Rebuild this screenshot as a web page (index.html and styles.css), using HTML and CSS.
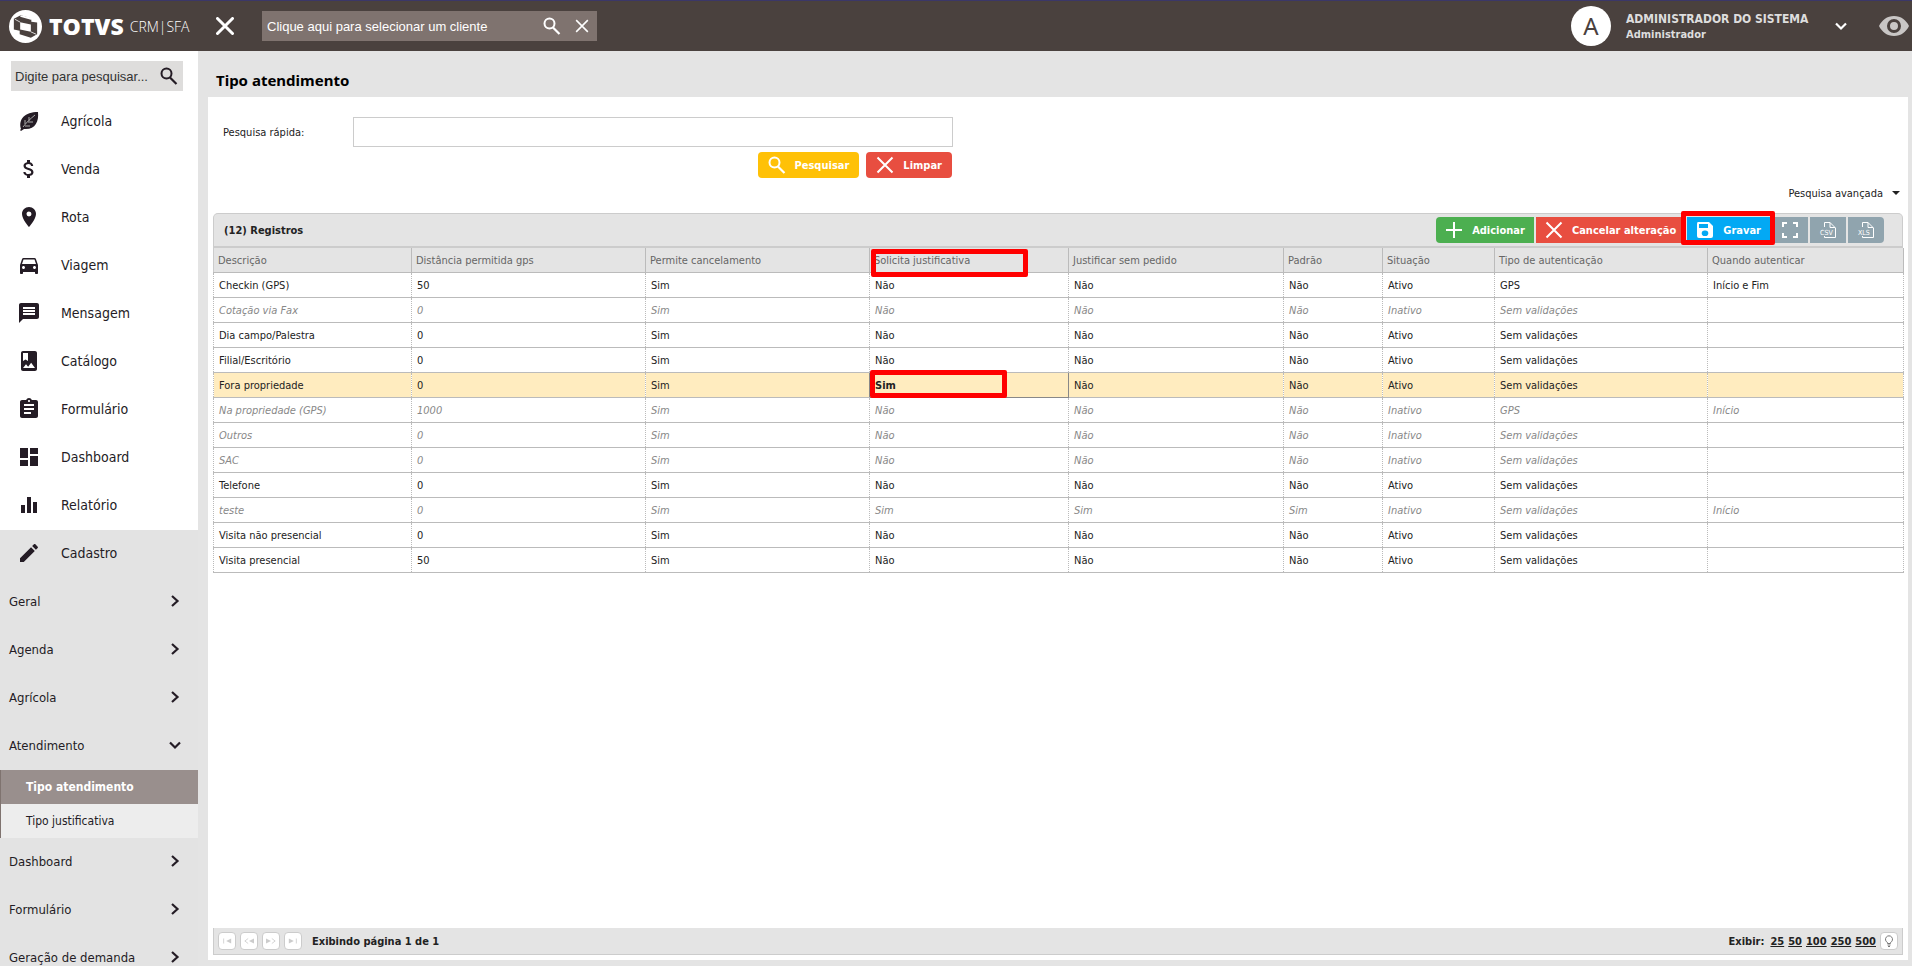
FILE: index.html
```
<!DOCTYPE html>
<html lang="pt-BR">
<head>
    <meta charset="utf-8">
    <title>TOTVS CRM | SFA - Tipo atendimento</title>
    <link rel="stylesheet" href="styles.css">
</head>
<body>
    <svg class="sprite" aria-hidden="true">
        <symbol id="search" viewBox="0 0 18 18"><circle cx="6.500" cy="6.500" r="5" fill="none" stroke="currentColor" stroke-width="2"/><path d="M10 10.500 L16.500 17" stroke="currentColor" stroke-width="2.200"/></symbol>
        <symbol id="close" viewBox="0 0 18 18"><path d="M1.500 1.500 L16.500 16.500 M16.500 1.500 L1.500 16.500" stroke="currentColor" stroke-width="2"/></symbol>
        <symbol id="close-bold" viewBox="0 0 18 18"><path d="M1.500 1.500 L16.500 16.500 M16.500 1.500 L1.500 16.500" stroke="currentColor" stroke-width="3" stroke-linecap="round"/></symbol>
        <symbol id="right" viewBox="0 0 12 12"><path d="M3 1 L8.500 6 L3 11" fill="none" stroke="currentColor" stroke-width="2.200"/></symbol>
        <symbol id="down" viewBox="0 0 12 12"><path d="M1 3.500 L6 8.500 L11 3.500" fill="none" stroke="currentColor" stroke-width="2.200"/></symbol>
    </svg>

    <header class="topbar">
        <a class="brand" href="#">
            <svg class="brand-mark" viewBox="0 0 34 34"><circle cx="17" cy="17" r="17" fill="#fff"/><path d="M12 5.500 L23 8.500 V12 L29 13 V25 L22.500 28.500 L11 25 V21.500 L5 20 V9 Z" fill="#4a413e"/><path d="M11.500 12.500 L22.500 15 V22.500 L11.500 20 Z M12 5.500 L11.500 7 L22.500 10 L28 9.500 L24 8 Z" fill="#fff"/><path d="M6 9.500 L11.500 12.500 M22.500 22.500 L28 25" stroke="#fff" stroke-width=".8"/></svg>
            <span class="brand-name">TOTVS</span>
            <span class="brand-product">CRM|SFA</span>
        </a>
        <button class="icon-btn menu-close" aria-label="Fechar menu"><svg width="18" height="18"><use href="#close-bold"/></svg></button>
        <div class="client-search">
            <input type="text" aria-label="Cliente" placeholder="Clique aqui para selecionar um cliente">
            <button class="icon-btn" aria-label="Buscar"><svg width="18" height="18"><use href="#search"/></svg></button>
            <button class="icon-btn" aria-label="Limpar cliente"><svg width="14" height="14"><use href="#close"/></svg></button>
        </div>
        <div class="user">
            <span class="avatar">A</span>
            <div class="user-name"><div>ADMINISTRADOR DO SISTEMA</div><div class="role">Administrador</div></div>
            <button class="icon-btn" aria-label="Menu do usuário"><svg width="12" height="12"><use href="#down"/></svg></button>
        </div>
        <button class="icon-btn eye" aria-label="Visualizar"><svg width="30" height="20" viewBox="0 0 30 20"><path fill-rule="evenodd" d="M15 0 C8 0 3 4 0 10 C3 16 8 20 15 20 C22 20 27 16 30 10 C27 4 22 0 15 0 Z M15 3 A7 7 0 1 1 15 17 A7 7 0 1 1 15 3 Z M15 6 A4 4 0 1 0 15 14 A4 4 0 1 0 15 6 Z" fill="currentColor"/></svg></button>
    </header>

    <div class="layout">
        <aside class="sidebar">
            <div class="menu-search">
                <input type="text" aria-label="Pesquisar menu" placeholder="Digite para pesquisar...">
                <button class="icon-btn" aria-label="Pesquisar"><svg width="18" height="18"><use href="#search"/></svg></button>
            </div>
            <nav>
                <a class="nav-item" href="#"><svg viewBox="0 0 24 24"><path d="M4 20 C1 10 8 3 21 3 C22 13 18 21 7 20 L4 22 L3 21 Z" fill="currentColor"/><path d="M6 18 C9 14 13 10 18 6 M8 17 H13 M8 15 V11 M11 13 H16 M12 12 V8" fill="none" stroke="#aaa" stroke-width="1"/></svg>Agrícola</a>
                <a class="nav-item" href="#"><svg viewBox="0 0 24 24"><path fill="currentColor" d="M11.800 10.900c-2.270-.590-3-1.200-3-2.150 0-1.090 1.010-1.850 2.700-1.850 1.780 0 2.440.850 2.500 2.100h2.210c-.070-1.720-1.120-3.300-3.210-3.810V3h-3v2.160c-1.940.420-3.500 1.680-3.500 3.610 0 2.310 1.910 3.460 4.700 4.130 2.500.600 3 1.480 3 2.410 0 .690-.490 1.790-2.700 1.790-2.060 0-2.870-.920-2.980-2.100h-2.200c.120 2.190 1.760 3.420 3.680 3.830V21h3v-2.150c1.950-.370 3.500-1.500 3.500-3.550 0-2.840-2.430-3.810-4.700-4.400z"/></svg>Venda</a>
                <a class="nav-item" href="#"><svg viewBox="0 0 24 24"><path fill="currentColor" d="M12 2C8.130 2 5 5.130 5 9c0 5.250 7 13 7 13s7-7.750 7-13c0-3.870-3.130-7-7-7zm0 9.500a2.500 2.500 0 010-5 2.500 2.500 0 010 5z"/></svg>Rota</a>
                <a class="nav-item" href="#"><svg viewBox="0 0 24 24"><path fill="currentColor" d="M18.920 6.010C18.720 5.420 18.160 5 17.500 5h-11c-.660 0-1.210.420-1.420 1.010L3 12v8c0 .550.450 1 1 1h1c.550 0 1-.450 1-1v-1h12v1c0 .550.450 1 1 1h1c.550 0 1-.450 1-1v-8l-2.080-5.990zM6.500 16c-.830 0-1.500-.670-1.500-1.500S5.670 13 6.500 13s1.500.670 1.500 1.500S7.330 16 6.500 16zm11 0c-.830 0-1.500-.670-1.500-1.500s.670-1.500 1.500-1.500 1.500.670 1.500 1.500-.670 1.500-1.500 1.500zM5 11l1.500-4.500h11L19 11H5z"/></svg>Viagem</a>
                <a class="nav-item" href="#"><svg viewBox="0 0 24 24"><path fill="currentColor" d="M20 2H4c-1.100 0-1.990.900-1.990 2L2 22l4-4h14c1.100 0 2-.900 2-2V4c0-1.100-.900-2-2-2zm-2 12H6v-2h12v2zm0-3H6V9h12v2zm0-3H6V6h12v2z"/></svg>Mensagem</a>
                <a class="nav-item" href="#"><svg viewBox="0 0 24 24"><path fill="currentColor" d="M18 2H6c-1.100 0-2 .900-2 2v16c0 1.100.900 2 2 2h12c1.100 0 2-.900 2-2V4c0-1.100-.900-2-2-2zM6 4h5v8l-2.500-1.500L6 12V4zm0 15l3-3.860 2.140 2.580 3-3.860L18 19H6z"/></svg>Catálogo</a>
                <a class="nav-item" href="#"><svg viewBox="0 0 24 24"><path fill="currentColor" d="M19 3h-4.180C14.400 1.840 13.300 1 12 1c-1.300 0-2.400.840-2.820 2H5c-1.100 0-2 .900-2 2v14c0 1.100.900 2 2 2h14c1.100 0 2-.900 2-2V5c0-1.100-.900-2-2-2zm-7 0c.550 0 1 .450 1 1s-.450 1-1 1-1-.450-1-1 .450-1 1-1zm2 14H7v-2h7v2zm3-4H7v-2h10v2zm0-4H7V7h10v2z"/></svg>Formulário</a>
                <a class="nav-item" href="#"><svg viewBox="0 0 24 24"><path fill="currentColor" d="M3 13h8V3H3v10zm0 8h8v-6H3v6zm10 0h8V11h-8v10zm0-18v6h8V3h-8z"/></svg>Dashboard</a>
                <a class="nav-item" href="#"><svg viewBox="0 0 24 24"><path fill="currentColor" d="M4 12h4v8H4zM10 4h4v16h-4zM16 9h4v11h-4z"/></svg>Relatório</a>
                <a class="nav-item open" href="#"><svg viewBox="0 0 24 24"><path fill="currentColor" d="M3 17.250V21h3.750L17.810 9.940l-3.750-3.750L3 17.250zM20.710 7.040c.390-.390.390-1.020 0-1.410l-2.340-2.340c-.390-.390-1.020-.390-1.410 0l-1.830 1.830 3.750 3.750 1.830-1.830z"/></svg>Cadastro</a>
                <div class="submenu">
                    <a class="sub-item" href="#">Geral<svg><use href="#right"/></svg></a>
                    <a class="sub-item" href="#">Agenda<svg><use href="#right"/></svg></a>
                    <a class="sub-item" href="#">Agrícola<svg><use href="#right"/></svg></a>
                    <a class="sub-item" href="#">Atendimento<svg><use href="#down"/></svg></a>
                    <a class="leaf-item active" href="#">Tipo atendimento</a>
                    <a class="leaf-item" href="#">Tipo justificativa</a>
                    <a class="sub-item" href="#">Dashboard<svg><use href="#right"/></svg></a>
                    <a class="sub-item" href="#">Formulário<svg><use href="#right"/></svg></a>
                    <a class="sub-item" href="#">Geração de demanda<svg><use href="#right"/></svg></a>
                </div>
            </nav>
        </aside>

        <main class="content">
            <h1>Tipo atendimento</h1>
            <section class="panel">
                <form class="filter">
                    <label for="quick">Pesquisa rápida:</label>
                    <div class="filter-field">
                        <input type="text" id="quick">
                        <div class="filter-actions">
                            <button type="button" class="btn yellow"><svg width="18" height="18"><use href="#search"/></svg>Pesquisar</button>
                            <button type="button" class="btn red"><svg width="18" height="18"><use href="#close"/></svg>Limpar</button>
                        </div>
                    </div>
                </form>
                <a class="advanced" href="#">Pesquisa avançada<span class="caret"></span></a>

                <div class="grid-head">
                    <h2>(12) Registros</h2>
                    <div class="toolbar">
                        <button class="btn green"><svg width="18" height="18" viewBox="0 0 18 18"><path d="M9 1 V17 M1 9 H17" stroke="currentColor" stroke-width="2"/></svg>Adicionar</button>
                        <button class="btn red"><svg width="18" height="18"><use href="#close"/></svg>Cancelar alteração</button>
                        <div class="marked">
                            <button class="btn blue"><svg width="18" height="18" viewBox="0 0 18 18"><path fill="currentColor" fill-rule="evenodd" d="M2 1 H13 L17 5 V15 Q17 17 15 17 H3 Q1 17 1 15 V3 Q1 1 2 1 Z M3 3 V7 H12 V3 Z M9 9.500 A2.800 2.800 0 1 0 9 15 A2.800 2.800 0 1 0 9 9.500 Z"/></svg>Gravar</button>
                            <span class="mark mark-save"></span>
                        </div>
                        <button class="btn gray" aria-label="Tela cheia"><svg width="16" height="16" viewBox="0 0 16 16"><path d="M1 5 V1 H5 M11 1 H15 V5 M15 11 V15 H11 M5 15 H1 V11" fill="none" stroke="currentColor" stroke-width="2"/></svg></button>
                        <button class="btn gray" aria-label="Exportar CSV"><svg width="18" height="18" viewBox="0 0 18 18"><path d="M5.500 6 V1.500 H11 L16.500 7 V16.500 H5.500 V15 M11 1.500 V6.500 H16" fill="none" stroke="currentColor"/><text x="1" y="14" class="icon-text">CSV</text></svg></button>
                        <button class="btn gray" aria-label="Exportar XLS"><svg width="18" height="18" viewBox="0 0 18 18"><path d="M5.500 6 V1.500 H11 L16.500 7 V16.500 H5.500 V15 M11 1.500 V6.500 H16" fill="none" stroke="currentColor"/><text x="1" y="14" class="icon-text">XLS</text></svg></button>
                    </div>
                </div>
                <table class="grid">
                    <colgroup><col class="c1"><col class="c2"><col class="c3"><col class="c4"><col class="c5"><col class="c6"><col class="c7"><col class="c8"><col class="c9"></colgroup>
                    <thead>
                        <tr><th>Descrição</th><th>Distância permitida gps</th><th>Permite cancelamento</th><th>Solicita justificativa<span class="mark mark-column"></span></th><th>Justificar sem pedido</th><th>Padrão</th><th>Situação</th><th>Tipo de autenticação</th><th>Quando autenticar</th></tr>
                    </thead>
                    <tbody>
                        <tr><td>Checkin (GPS)</td><td>50</td><td>Sim</td><td>Não</td><td>Não</td><td>Não</td><td>Ativo</td><td>GPS</td><td>Início e Fim</td></tr>
                        <tr class="inactive"><td>Cotação via Fax</td><td>0</td><td>Sim</td><td>Não</td><td>Não</td><td>Não</td><td>Inativo</td><td>Sem validações</td><td></td></tr>
                        <tr><td>Dia campo/Palestra</td><td>0</td><td>Sim</td><td>Não</td><td>Não</td><td>Não</td><td>Ativo</td><td>Sem validações</td><td></td></tr>
                        <tr><td>Filial/Escritório</td><td>0</td><td>Sim</td><td>Não</td><td>Não</td><td>Não</td><td>Ativo</td><td>Sem validações</td><td></td></tr>
                        <tr class="selected"><td>Fora propriedade</td><td>0</td><td>Sim</td><td class="editing">Sim<span class="mark mark-cell"></span></td><td>Não</td><td>Não</td><td>Ativo</td><td>Sem validações</td><td></td></tr>
                        <tr class="inactive"><td>Na propriedade (GPS)</td><td>1000</td><td>Sim</td><td>Não</td><td>Não</td><td>Não</td><td>Inativo</td><td>GPS</td><td>Início</td></tr>
                        <tr class="inactive"><td>Outros</td><td>0</td><td>Sim</td><td>Não</td><td>Não</td><td>Não</td><td>Inativo</td><td>Sem validações</td><td></td></tr>
                        <tr class="inactive"><td>SAC</td><td>0</td><td>Sim</td><td>Não</td><td>Não</td><td>Não</td><td>Inativo</td><td>Sem validações</td><td></td></tr>
                        <tr><td>Telefone</td><td>0</td><td>Sim</td><td>Não</td><td>Não</td><td>Não</td><td>Ativo</td><td>Sem validações</td><td></td></tr>
                        <tr class="inactive"><td>teste</td><td>0</td><td>Sim</td><td>Sim</td><td>Sim</td><td>Sim</td><td>Inativo</td><td>Sem validações</td><td>Início</td></tr>
                        <tr><td>Visita não presencial</td><td>0</td><td>Sim</td><td>Não</td><td>Não</td><td>Não</td><td>Ativo</td><td>Sem validações</td><td></td></tr>
                        <tr><td>Visita presencial</td><td>50</td><td>Sim</td><td>Não</td><td>Não</td><td>Não</td><td>Ativo</td><td>Sem validações</td><td></td></tr>
                    </tbody>
                </table>
                <footer class="pager">
                    <button class="page-btn" aria-label="Primeira página"><svg viewBox="0 0 12 8"><path d="M2 1 V7" stroke="currentColor"/><path d="M11 1 V7 L5 4 Z" fill="currentColor"/></svg></button>
                    <button class="page-btn" aria-label="Página anterior"><svg viewBox="0 0 12 8"><path d="M5 1 L1 4 L5 7" fill="none" stroke="currentColor"/><path d="M12 1 V7 L6 4 Z" fill="currentColor"/></svg></button>
                    <button class="page-btn" aria-label="Próxima página"><svg viewBox="0 0 12 8"><path d="M7 1 L11 4 L7 7" fill="none" stroke="currentColor"/><path d="M0 1 V7 L6 4 Z" fill="currentColor"/></svg></button>
                    <button class="page-btn" aria-label="Última página"><svg viewBox="0 0 12 8"><path d="M10 1 V7" stroke="currentColor"/><path d="M1 1 V7 L7 4 Z" fill="currentColor"/></svg></button>
                    <span class="page-info">Exibindo página 1 de 1</span>
                    <span class="page-size">Exibir:</span>
                    <a href="#">25</a><a href="#">50</a><a href="#">100</a><a href="#">250</a><a href="#">500</a>
                    <button class="page-btn bulb" aria-label="Dica"><svg viewBox="0 0 12 12"><path d="M4.500 8.500 V7.500 A3.500 3.500 0 1 1 7.500 7.500 V8.500 Z M4.500 10 H7.500 M5 11.500 H7" fill="none" stroke="currentColor"/></svg></button>
                </footer>
            </section>
        </main>
    </div>
</body>
</html>
```
FILE: styles.css
```
* { box-sizing: border-box; }
body { margin: 0; height: 100vh; display: flex; flex-direction: column; overflow: hidden; font-family: "DejaVu Sans Condensed", "DejaVu Sans", sans-serif; font-size: 11px; color: #222; background: #e4e4e4; }
a { color: inherit; text-decoration: none; }
button, input { font-family: inherit; font-size: inherit; }
.sprite { display: none; }
.icon-btn { display: flex; padding: 0; background: none; border: none; color: inherit; cursor: pointer; }

/* top bar */
.topbar { display: flex; flex: none; align-items: center; height: 51px; padding-left: 9px; padding-right: 3px; background: #4a413e; border-top: 1px solid #3b3768; color: #fff; }
.brand { display: flex; align-items: center; width: 207px; }
.brand-mark { width: 33px; height: 33px; }
.brand-name { margin-left: 7px; font-family: "Open Sans", sans-serif; font-size: 23px; font-weight: 800; }
.brand-product { margin-left: 6px; font-family: "Open Sans", sans-serif; font-size: 14px; font-weight: 300; }
.client-search { display: flex; align-items: center; gap: 14px; width: 335px; height: 30px; margin-left: 28px; padding: 0 8px 0 5px; background: #7f736f; }
.client-search input { flex: 1; min-width: 0; padding: 0; background: none; border: none; color: #fff; font-family: "Liberation Sans", Arial, sans-serif; font-size: 13px; }
input::placeholder { color: inherit; opacity: 1; }
.user { display: flex; align-items: center; margin-left: auto; color: #fff; }
.avatar { width: 40px; height: 40px; margin-right: 15px; border-radius: 50%; background: #fff; color: #4a413e; font-family: "Noto Sans", sans-serif; font-size: 24px; line-height: 40px; text-align: center; }
.user-name { width: 209px; padding-top: 2px; font-size: 12px; font-weight: bold; line-height: 15px; color: #ddd; }
.role { font-size: 11px; }
.eye { margin-left: 32px; color: #c9c6c5; }

/* side menu */
.layout { display: flex; flex: 1; min-height: 0; }
.sidebar { flex: none; width: 198px; overflow: hidden; background: #fff; color: #241c25; }
.menu-search { display: flex; align-items: center; height: 30px; margin: 10px 15px 7px 11px; padding: 0 5px 0 4px; background: #dedddc; }
.menu-search input { flex: 1; min-width: 0; padding: 0; background: none; border: none; color: #333; font-family: "Liberation Sans", Arial, sans-serif; font-size: 13px; }
.nav-item { display: flex; align-items: center; gap: 20px; height: 48px; padding: 0 0 2px 17px; font-size: 14px; }
.nav-item svg { width: 24px; height: 24px; }
.nav-item.open, .submenu { background: #e3e3e3; }
.sub-item { display: flex; align-items: center; justify-content: space-between; height: 48px; padding: 0 17px 2px 9px; font-size: 13px; }
.sub-item svg { width: 12px; height: 12px; }
.leaf-item { display: flex; align-items: center; height: 34px; padding-left: 25px; border-left: 1px solid #7f736f; background: #ededed; font-size: 12px; }
.leaf-item.active { background: #998f8d; color: #fff; font-weight: bold; }

/* content */
.content { display: flex; flex: 1; flex-direction: column; min-width: 0; padding: 0 4px 6px 10px; }
h1 { margin: 0; padding-left: 8px; font-family: "Noto Sans", sans-serif; font-size: 15px; line-height: 58px; height: 46px; color: #000; }
.panel { display: flex; flex: 1; flex-direction: column; padding: 20px 5px 5px 5px; background: #fff; }
.filter { display: flex; padding-left: 10px; }
.filter label { width: 130px; line-height: 32px; }
.filter-field { width: 600px; }
.filter-field input { display: block; width: 100%; height: 30px; border: 1px solid #ccc; }
.filter-actions { display: flex; justify-content: flex-end; gap: 7px; margin: 5px 1px 0 0; }
.btn { display: flex; align-items: center; justify-content: center; gap: 9px; height: 26px; padding: 0 10px; border: none; color: #fff; font-weight: bold; cursor: pointer; }
.filter-actions .btn { border-radius: 4px; }
.yellow { background: #ffc107; }
.red { background: #e84e40; }
.green { background: #4caf50; border-radius: 4px 0 0 4px; }
.blue { background: #03a9f4; }
.toolbar .btn { padding: 0 9px; }
.toolbar .gray { width: 36px; padding: 0; background: #90a4ae; }
.toolbar .gray:last-child { border-radius: 0 4px 4px 0; }
.icon-text { font-size: 7px; font-weight: normal; fill: currentColor; }
.advanced { display: flex; align-items: center; align-self: flex-end; gap: 9px; height: 20px; margin: 5px 3px 10px 0; }
.caret { border: 4px solid transparent; border-top: 4px solid #222; border-bottom: none; }

.grid-head { display: flex; align-items: center; justify-content: space-between; height: 35px; padding: 0 18px 0 10px; background: #e4e4e4; border: 1px solid #ccc; border-bottom: 2px solid #ccc; border-radius: 5px 5px 0 0; }
h2 { margin: 0; font-size: 11px; }
.toolbar { display: flex; gap: 2px; }
.marked { position: relative; }

.grid { width: 100%; table-layout: fixed; border-collapse: collapse; }
.grid th, .grid td { position: relative; height: 25px; padding: 2px 4px 0 5px; border: 1px dotted #bbb; border-bottom: 1px solid #bbb; text-align: left; white-space: nowrap; }
.grid th { height: 24px; padding-left: 4px; border: 1px solid #bbb; border-top: none; border-left-color: #ccc; background: #e4e4e4; color: #666; font-weight: normal; }
.grid .inactive { color: #888; font-style: italic; }
.grid .selected { background: #ffecbf; }
.grid .selected .editing { border: 1px solid #888; font-weight: bold; }
.c1 { width: 198px; }
.c2 { width: 234px; }
.c3 { width: 224px; }
.c4 { width: 199px; }
.c5 { width: 215px; }
.c6 { width: 99px; }
.c7 { width: 112px; }
.c8 { width: 213px; }
.c9 { width: 196px; }

/* red highlight frames */
.mark { position: absolute; border: 5px solid #f00; border-radius: 2px; pointer-events: none; }
.mark-save { inset: -6px -5px -2px -6px; }
.mark-column { left: 1px; top: 1px; width: 157px; height: 28px; }
.mark-cell { left: 0; top: -3px; width: 137px; height: 28px; }

.pager { display: flex; align-items: center; height: 27px; margin-top: auto; padding: 0 4px; gap: 4px; background: #e4e4e4; border: 1px solid #ccc; border-top: none; font-weight: bold; }
.page-btn { display: flex; align-items: center; justify-content: center; width: 18px; height: 18px; padding: 0; background: #fff; border: 1px solid #ccc; border-radius: 4px; color: #ccc; }
.page-btn svg { width: 10px; height: 8px; }
.page-info { margin-left: 6px; }
.page-size { margin-left: auto; margin-right: 2px; }
.pager a { text-decoration: underline; }
.bulb { color: #777; }
.bulb svg { width: 12px; height: 12px; }
```
